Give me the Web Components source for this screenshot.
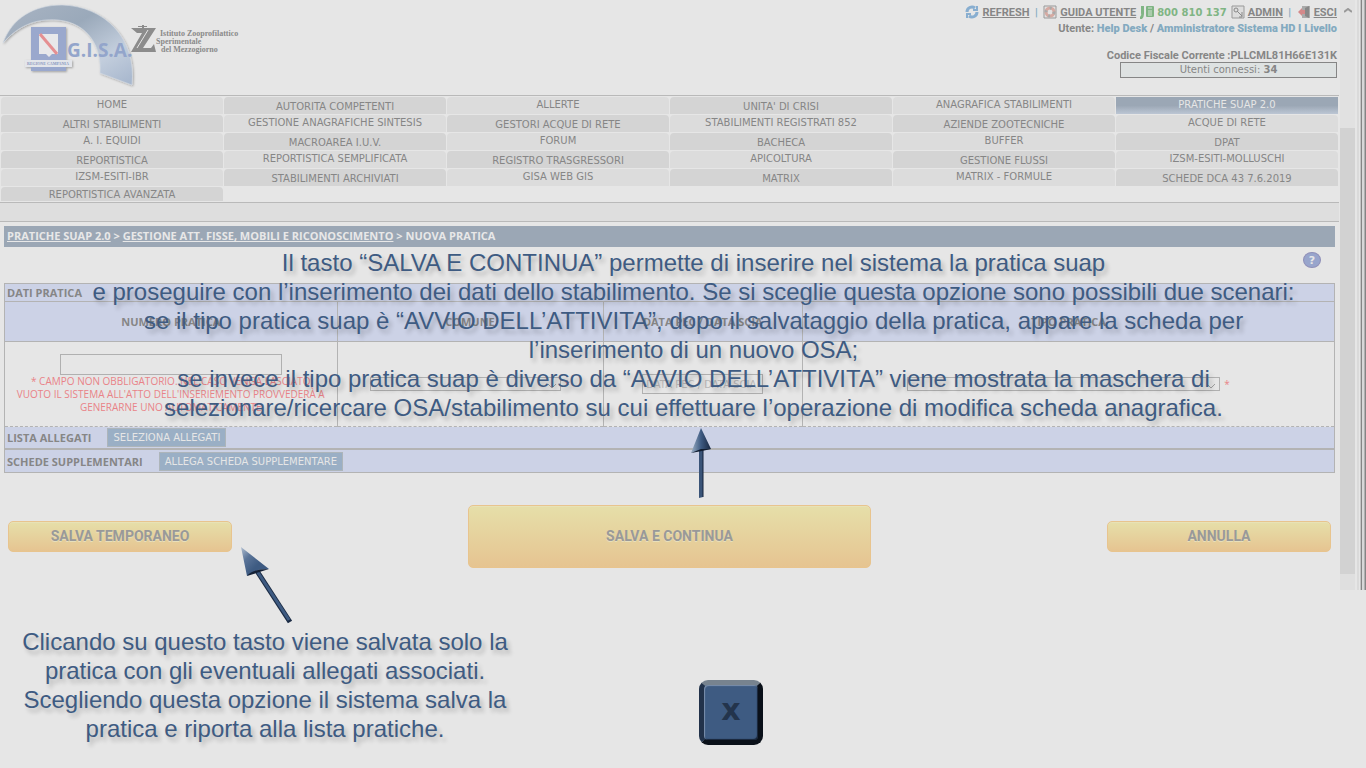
<!DOCTYPE html>
<html lang="it">
<head>
<meta charset="utf-8">
<meta name="viewport" content="width=device-width, initial-scale=1">
<title>G.I.S.A. - Nuova pratica</title>
<style>
html,body{margin:0;min-height:100%;background:#e6e6e6}
body{font-family:"DejaVu Sans",Verdana,sans-serif;font-size:10px;color:#868686}
</style>
</head>
<body>
<gisa-app></gisa-app>
<script>
const define = (name, html, setup) => customElements.define(name, class extends HTMLElement {
  constructor() {
    super();
    const t = document.createElement('template');
    t.innerHTML = html;
    this.attachShadow({mode: 'open'}).appendChild(t.content.cloneNode(true));
  }
  connectedCallback() { if (setup) setup(this, this.shadowRoot); }
});

define('gisa-logo', `
<style>:host{display:block;width:240px;height:92px}svg{display:block}</style>
<svg width="240" height="92" viewBox="0 0 240 92" role="img" aria-label="G.I.S.A. Regione Campania">
  <defs>
    <linearGradient id="s" x1="0" y1="0" x2="1" y2="1">
      <stop offset="0" stop-color="#a9b4c3"/><stop offset=".4" stop-color="#9aa9ba"/>
      <stop offset=".72" stop-color="#c3cedd"/><stop offset="1" stop-color="#a5b5cc"/>
    </linearGradient>
    <filter id="d" x="-10%" y="-10%" width="125%" height="125%"><feDropShadow dx="1" dy="1" stdDeviation="1" flood-opacity=".3"/></filter>
  </defs>
  <path filter="url(#d)" fill="url(#s)" stroke="#d5dbe4" stroke-width=".6" d="M3 43C12 18 34 5 62 5C104 6 137 38 132 85L100 73C102 48 89 23 58 20C34 18 17 27 3 43Z"/>
  <g filter="url(#d)"><rect x="31" y="27" width="35" height="44" fill="#9aa8cd"/><rect x="25" y="60" width="47" height="7" fill="#e3e5ea"/></g>
  <path d="M39 34H58V54H52L49 57L46 54H39Z" fill="#e8e8ea"/>
  <path d="M40 34L57 54" stroke="#e58f92" stroke-width="3"/>
  <text x="27" y="65" font-family="Liberation Serif,serif" font-size="4" font-weight="bold" fill="#8796c0">REGIONE CAMPANIA</text>
  <text x="67" y="57" font-family="Open Sans,sans-serif" font-size="19" font-weight="bold" fill="#93a5cb">G.I.S.A.</text>
  <path fill="#8c8c8c" d="M131 28H156L143 48H151L154 44L156 52H131L142 33H137ZM138 26H142V25H144V26H147V27H144V38H142V27H138Z"/>
  <path stroke="#e6e6e6" fill="none" d="M148 30L137 48"/>
  <g font-family="Liberation Serif,serif" font-size="8" font-weight="bold" fill="#8a8a8a">
    <text x="160" y="36">Istituto Zooprofilattico</text><text x="156" y="44">Sperimentale</text><text x="161" y="52">del Mezzogiorno</text>
  </g>
</svg>`);

define('gisa-header', `
<style>
:host{display:flex;justify-content:space-between;height:95px;border-bottom:1px solid #b9b9b9}
.r{display:flex;flex-direction:column;align-items:flex-end;padding:4px 2px 0 0;font:bold 11px Roboto,"DejaVu Sans",sans-serif}
.top,.who{display:flex;align-items:center;height:16px;white-space:pre}
a{color:inherit}.sep,b{color:#83aac0}
.tel{color:#80b584;margin-right:4px;font-family:"DejaVu Sans",sans-serif;font-size:10px}
svg{display:block;width:14px;height:14px;margin-right:3px}
.ph{margin-left:4px}
.cf{margin-top:13px;line-height:13px}
.box{box-sizing:border-box;width:217px;height:16px;line-height:14px;border:1px solid #868686;background:#dee2e2;text-align:center;font-family:"DejaVu Sans",sans-serif;font-size:10px;font-weight:normal}
</style>
<gisa-logo></gisa-logo>
<div class="r">
  <div class="top">
    <svg viewBox="0 0 14 14" fill="none" stroke="#88aed0" stroke-width="3"><path d="M2 7A5 5 0 0 1 10 3"/><path d="M12 7A5 5 0 0 1 4 11"/><path d="M8 5H12V1M6 9H2V13" stroke-width="2"/></svg><a href="#">REFRESH</a><span class="sep">  |  </span><svg viewBox="0 0 14 14"><path d="M1 1H13V13H1Z" fill="#e2e2e2" stroke="#999"/><circle cx="7" cy="7" r="4" fill="none" stroke="#d6aaa2" stroke-width="3"/><circle cx="7" cy="7" r="4" fill="none" stroke="#aaa" stroke-width="3" stroke-dasharray="2 4"/></svg><a href="#">GUIDA UTENTE</a><svg class="ph" viewBox="0 0 14 14"><path d="M1 1H4V9Q4 12 2 14H0V12Q2 10 1 8Z" fill="#80b584"/><rect x="6" y="1" width="8" height="11" rx="1" fill="#80b584"/><path d="M8 3H12M8 6H12M8 8H12M8 10H12" stroke="#d5e2d5"/></svg><span class="tel">800 810 137</span><svg viewBox="0 0 14 14"><path d="M1 1H13V13H1Z" fill="#ddd" stroke="#999"/><circle cx="5" cy="5" r="2" fill="none" stroke="#888"/><path d="M6 6L11 11M11 7V12H8" stroke="#888" fill="none"/></svg><a href="#">ADMIN</a><span class="sep">  |  </span><svg viewBox="0 0 14 14"><path d="M5 1H13V13H5Z" fill="#aaa"/><path d="M8 3L12 1V13L8 11Z" fill="#888"/><path d="M1 7L5 3V5H8V9H5V11Z" fill="#d4898a"/></svg><a href="#">ESCI</a>
  </div>
  <div class="who">Utente: <b>Help Desk</b> / <b>Amministratore Sistema HD I Livello</b></div>
  <div class="cf">Codice Fiscale Corrente :PLLCML81H66E131K</div>
  <div class="box">Utenti connessi: <strong>34</strong></div>
</div>`);

define('nav-tab', `
<style>
:host{display:block;height:17px}
a{box-sizing:border-box;display:block;height:100%;padding:1px 0 3px;line-height:13px;text-align:center;color:#868686;text-decoration:none;background:#dcdcdc;border-radius:4px 4px 0 0;white-space:nowrap}
:host([dark]) a{padding:3px 0 1px;background:#d4d4d4}
:host([last]){height:14px}:host([last]) a{padding:1px 0 0}
:host([active]) a{border-radius:0;color:#e6e6e6;background:linear-gradient(#9ba7b5 50%,#bcc6d4)}
</style><a href="#"><slot></slot></a>`);

define('gisa-nav', `
<style>
:host{display:block;border-bottom:1px solid #b9b9b9;padding:1px 1px 1px 1px}
nav{display:grid;grid-template-columns:repeat(6,1fr);gap:1px}
</style><nav></nav>`, (h, r) => {
  const rows = [
    ['HOME','AUTORITA COMPETENTI','ALLERTE',"UNITA' DI CRISI",'ANAGRAFICA STABILIMENTI','PRATICHE SUAP 2.0'],
    ['ALTRI STABILIMENTI','GESTIONE ANAGRAFICHE SINTESIS','GESTORI ACQUE DI RETE','STABILIMENTI REGISTRATI 852','AZIENDE ZOOTECNICHE','ACQUE DI RETE'],
    ['A. I. EQUIDI','MACROAREA I.U.V.','FORUM','BACHECA','BUFFER','DPAT'],
    ['REPORTISTICA','REPORTISTICA SEMPLIFICATA','REGISTRO TRASGRESSORI','APICOLTURA','GESTIONE FLUSSI','IZSM-ESITI-MOLLUSCHI'],
    ['IZSM-ESITI-IBR','STABILIMENTI ARCHIVIATI','GISA WEB GIS','MATRIX','MATRIX - FORMULE','SCHEDE DCA 43 7.6.2019'],
    ['REPORTISTICA AVANZATA']];
  const nav = r.querySelector('nav');
  rows.forEach((row, y) => row.forEach((label, x) => {
    const t = document.createElement('nav-tab');
    t.textContent = label;
    if (label === 'PRATICHE SUAP 2.0') t.setAttribute('active', '');
    else if ((x + y) % 2) t.setAttribute('dark', '');
    if (y === 5) t.setAttribute('last', '');
    nav.appendChild(t);
  }));
});

define('gisa-breadcrumb', `
<style>
:host{display:block;background:#9ba7b5;color:#e8e8e8;font:bold 11px/19px "Open Sans","DejaVu Sans",sans-serif;height:21px;padding-left:3px}
::slotted(a){color:inherit}
</style><slot></slot>`);

define('drop-down', `
<style>
:host{display:inline-block;position:relative;height:14px}
select{appearance:none;box-sizing:border-box;display:block;width:100%;height:14px;border:1px solid #b0b0b0;background:transparent;border-radius:0;margin:0;padding:0}
svg{position:absolute;right:4px;top:7px;pointer-events:none}
</style>
<select><option></option></select>
<svg width="9" height="6" fill="none" stroke="#a0a0a0"><path d="M0 0L4 4L8 0"/></svg>`,
(h, r) => r.querySelector('select').setAttribute('aria-label', h.getAttribute('label')));

define('pratica-form', `
<style>
:host{display:block}
table{width:100%;border-collapse:collapse;table-layout:fixed}
td,th{border:1px solid #b3b3b3;padding:0;text-align:center}
thead th{background:#ccd2e6;font:bold 11px "Open Sans","DejaVu Sans",sans-serif}
.t th{height:17px;line-height:15px;text-align:left;padding-left:2px}
.h th{height:39px}
.b td{height:84px;font:10px/13px "Open Sans","DejaVu Sans",sans-serif;border-bottom-style:dashed;white-space:nowrap}
.a{width:25%}.c{width:20%}.d{width:15%}.e{width:40%}
.b .red,.red{color:#e98388}
input{box-sizing:border-box;display:block;margin:0 auto;border:1px solid #b0b0b0;background:transparent;font:10px "DejaVu Sans",sans-serif;padding:0 3px}
#n{width:222px;height:21px}#dt{width:121px;height:20px}
input::placeholder{color:#b9b9b9}
.s1{width:191px}.s2{width:313px}
.f{display:flex;justify-content:center;align-items:center;gap:4px}
.row{box-sizing:border-box;display:flex;align-items:center;gap:16px;height:22px;padding-left:2px;border:1px solid #b3b3b3;border-top:0;background:#ccd2e6;font:bold 11px "Open Sans","DejaVu Sans",sans-serif}
.row+.row{height:24px;border-top:1px solid #b3b3b3}
button{height:19px;padding:0 5px;border:1px solid #adb5ba;background:#9aafc5;color:#e6e6e6;font:10px "DejaVu Sans",sans-serif;white-space:nowrap}
</style>
<table>
<colgroup><col class="a"><col class="c"><col class="d"><col class="e"></colgroup>
<thead>
<tr class="t"><th colspan="4">DATI PRATICA</th></tr>
<tr class="h"><th id="h1">NUMERO PRATICA</th><th>COMUNE</th><th id="h3">DATA PEC / DATA SCIA</th><th>TIPO PRATICA</th></tr>
</thead>
<tbody><tr class="b">
<td class="red"><input id="n" aria-labelledby="h1">* CAMPO NON OBBLIGATORIO. NEL CASO VENGA LASCIATO<br>VUOTO IL SISTEMA ALL'ATTO DELL'INSERIEMENTO PROVVEDERÀ A<br>GENERARNE UNO AUTOMATICAMENTE</td>
<td><div class="f"><drop-down class="s1" label="COMUNE"></drop-down><span class="red">*</span></div></td>
<td><input id="dt" aria-labelledby="h3" placeholder="DATA PEC / DATA SCIA"></td>
<td><div class="f"><drop-down class="s2" label="TIPO PRATICA"></drop-down><span class="red">*</span></div></td>
</tr></tbody></table>
<div class="row"><span>LISTA ALLEGATI</span><button>SELEZIONA ALLEGATI</button></div>
<div class="row"><span>SCHEDE SUPPLEMENTARI</span><button>ALLEGA SCHEDA SUPPLEMENTARE</button></div>`);

define('gold-button', `
<style>
:host{display:block;width:224px;height:31px}
:host([big]){width:403px;height:63px}
button{box-sizing:border-box;width:100%;height:100%;border:1px solid #e8c48e;border-radius:5px;background:linear-gradient(#e6dfa9,#e6c491);box-shadow:inset 0 1px #e8e2b6;color:#999;font:bold 14px Roboto,sans-serif;text-shadow:0 1px #e8e0bc;padding:0 0 1px}
</style><button><slot></slot></button>`);

define('page-scrollbar', `
<style>
:host{display:flex;width:26px;height:590px;margin-left:1px}
.t{display:flex;flex-direction:column;align-items:center;width:15px;background:#dfdfdf}
svg{flex:none}.up{flex:none;padding:8px 0 0;height:128px;background:#e1e1e1;width:15px;box-sizing:border-box;display:flex;justify-content:center}
.th{flex:none;height:446px;width:15px;background:#d2d2d2}.dn{padding-top:12px;height:4px;overflow:hidden}
.f{flex:1;margin-left:2px;background:linear-gradient(90deg,#dadada 0 2px,#e6e6e6 2px 3px,#c4c4c4 3px 4px,#858585 4px 5px,#d8d8d8 5px 7px,#b0b0b0 7px 8px,#858585 8px)}
</style>
<div class="t"><div class="up"><svg width="8" height="5" fill="none" stroke="#999" stroke-width="2"><path d="M0 4L4 1L8 4"/></svg></div><div class="th"></div><div class="dn"><svg width="8" height="5" fill="none" stroke="#aaa" stroke-width="2"><path d="M0 0L4 4L8 0"/></svg></div></div>
<div class="f"></div>`);

define('tutorial-note', `
<style>:host{display:block;text-align:center;font-family:"Liberation Sans",Arial,sans-serif;font-size:24px;line-height:29px;color:#3e5b82;text-shadow:3px 4px 4px rgba(0,0,0,.22)}
p{margin:0}</style><p><slot></slot></p>`);

define('key-button', `
<style>
:host{display:block}
button{display:block;box-sizing:border-box;width:64px;height:65px;padding:0 0 6px;border:5px solid;border-color:#77838f #0a1019 #0a1019 #22324a;border-radius:9px;background:#3e5b82;color:#23344c;font:bold 30px/40px "DejaVu Sans",sans-serif;box-shadow:inset 1px 1px 1px #7c90ac,inset -1px -1px 1px #182438}
</style><button aria-label="Chiudi"><slot></slot></button>`);

define('gisa-app', `
<style>
:host{display:flex;position:relative;min-height:768px;overflow:hidden}
main{flex:1;min-width:0}
.band{height:18px;background:#dedede;border-bottom:1px solid #b9b9b9}
.body{padding:4px 4px 0}
.help{display:flex;justify-content:flex-end;box-sizing:border-box;height:36px;padding:5px 14px 0 0}
.help button{width:18px;height:16px;border:1px solid #8f8fb8;border-radius:50%;background:#98a5cc;color:#e6e6e6;font:bold 11px/13px "DejaVu Sans",sans-serif;padding:0}
.actions{display:flex;justify-content:space-between;align-items:center;padding:32px 4px 0}
.over{position:absolute;pointer-events:none}
.n1{left:21px;right:0;top:248px}
.n2{left:15px;top:627px;width:500px}
.a1{left:688px;top:427px}.a2{left:238px;top:544px}
.key{left:699px;top:680px;pointer-events:auto}
</style>
<main>
  <gisa-header></gisa-header>
  <gisa-nav></gisa-nav>
  <div class="band"></div>
  <div class="body">
    <gisa-breadcrumb><a href="#">PRATICHE SUAP 2.0</a> &gt; <a href="#">GESTIONE ATT. FISSE, MOBILI E RICONOSCIMENTO</a> &gt; NUOVA PRATICA</gisa-breadcrumb>
    <div class="help"><button aria-label="Aiuto">?</button></div>
    <pratica-form></pratica-form>
    <div class="actions"><gold-button>SALVA TEMPORANEO</gold-button><gold-button big>SALVA E CONTINUA</gold-button><gold-button>ANNULLA</gold-button></div>
  </div>
</main>
<page-scrollbar></page-scrollbar>
<tutorial-note class="over n1">Il tasto “SALVA E CONTINUA” permette di inserire nel sistema la pratica suap<br>e proseguire con l’inserimento dei dati dello stabilimento. Se si sceglie questa opzione sono possibili due scenari:<br>se il tipo pratica suap è “AVVIO DELL’ATTIVITA”, dopo il salvataggio della pratica, appare la scheda per<br>l’inserimento di un nuovo OSA;<br>se invece il tipo pratica suap è diverso da “AVVIO DELL’ATTIVITA” viene mostrata la maschera di<br>selezionare/ricercare OSA/stabilimento su cui effettuare l’operazione di modifica scheda anagrafica.</tutorial-note>
<tutorial-note class="over n2">Clicando su questo tasto viene salvata solo la<br>pratica con gli eventuali allegati associati.<br>Scegliendo questa opzione il sistema salva la<br>pratica e riporta alla lista pratiche.</tutorial-note>
<svg class="over a1" width="26" height="72" viewBox="0 0 26 72">
  <defs><linearGradient id="g1"><stop offset="0" stop-color="#9db0c5"/><stop offset=".5" stop-color="#3e5b82"/><stop offset="1" stop-color="#182740"/></linearGradient></defs>
  <path d="M11 20H15V70L11 71Z" fill="#3a5478"/><path d="M15 22V70" stroke="#15233a" stroke-width="1"/>
  <path d="M13 1L23 22L13 23L3 26Z" fill="url(#g1)"/><path d="M3 26L13 22L23 22L14 24Z" fill="#111d30"/>
</svg>
<svg class="over a2" width="58" height="82" viewBox="0 0 58 82">
  <defs><linearGradient id="g2" x1="0" y1="0" x2="1" y2="1"><stop offset="0" stop-color="#b2c0d2"/><stop offset=".3" stop-color="#5a7498"/><stop offset=".6" stop-color="#3e5b82"/></linearGradient></defs>
  <path d="M19 27L52 78" stroke="#1b2b44" stroke-width="5"/><path d="M19 27L51 76" stroke="#3e5b82" stroke-width="3"/>
  <path d="M3 3L31 25L20 26L9 32Z" fill="url(#g2)"/><path d="M31 25L9 32Q14 25 31 25Z" fill="#142035"/>
</svg>
<key-button class="over key">x</key-button>`);
</script>
</body>
</html>
